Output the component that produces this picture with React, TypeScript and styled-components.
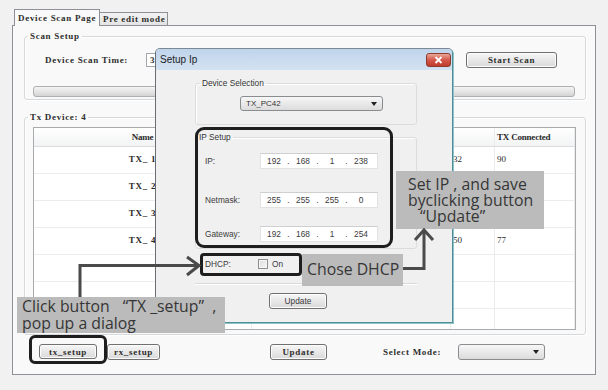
import React from "react";
import styled, { createGlobalStyle } from "styled-components";

const legacy = `"Liberation Serif", "Times New Roman", serif`;
const sans = `"Liberation Sans", Arial, sans-serif`;
const serif = `"Liberation Serif", "Times New Roman", serif`;
const anno = `"Open Sans", "Noto Sans", sans-serif`;

const Global = createGlobalStyle`
  html, body { margin: 0; padding: 0; background: #f1f1f1; }
  #root { width: 608px; height: 390px; }
  *, *::before, *::after { box-sizing: border-box; }
`;

const Screen = styled.div`
  position: relative;
  width: 608px;
  height: 390px;
  padding: 9px 12px 15px 12px;
  display: flex;
  flex-direction: column;
  background: #f1f1f1;
  overflow: hidden;
  font-family: ${legacy};
  font-size: 9px;
  font-weight: bold;
  letter-spacing: 0.7px;
  color: #2e2e2e;
`;

const TabStrip = styled.div`
  display: flex;
  align-items: flex-end;
  height: 16px;
  padding-left: 2px;
  position: relative;
  z-index: 1;
`;

const Tab = styled.div<{ $active?: boolean; $w: number }>`
  width: ${(p) => p.$w}px;
  height: ${(p) => (p.$active ? 17 : 13)}px;
  margin-bottom: ${(p) => (p.$active ? -1 : 0)}px;
  padding-left: 3px;
  display: flex;
  align-items: center;
  border: 1px solid #8d9094;
  border-bottom: none;
  border-left-width: ${(p) => (p.$active ? 1 : 0)}px;
  background: ${(p) => (p.$active ? "#f9f9f9" : "linear-gradient(#f2f2f2, #e3e3e3)")};
  white-space: nowrap;
`;

const Panel = styled.div`
  flex: 1;
  border: 1px solid #8d9094;
  background: #f9f9f9;
  padding: 5px 9px 0 11px;
  display: flex;
  flex-direction: column;
`;

const Group = styled.fieldset<{ $pad: string; $mt?: number }>`
  margin: ${(p) => p.$mt ?? 0}px 0 0 0;
  min-width: 0;
  border: 1px solid #d6d9dc;
  border-radius: 3px;
  box-shadow: inset 1px 1px 0 #ffffff, 1px 1px 0 #ffffff;
  padding: ${(p) => p.$pad};
  display: flex;
  flex-direction: column;
`;

const GroupTitle = styled.legend<{ $ml: number }>`
  margin-left: ${(p) => p.$ml}px;
  padding: 0 2px;
  height: 10px;
  line-height: 10px;
  white-space: nowrap;
`;

const ScanRow = styled.div`
  display: flex;
  align-items: center;
  height: 16px;
`;

const Label = styled.span<{ $ml?: number; $w?: number }>`
  margin-left: ${(p) => p.$ml ?? 0}px;
  width: ${(p) => (p.$w ? `${p.$w}px` : "auto")};
  flex: none;
  white-space: nowrap;
`;

const TextBox = styled.div<{ $w: number; $ml?: number }>`
  width: ${(p) => p.$w}px;
  height: 14px;
  margin-left: ${(p) => p.$ml ?? 0}px;
  border: 1px solid #a3a6aa;
  background: #ffffff;
  padding-left: 3px;
  display: flex;
  align-items: center;
`;

const Button = styled.div<{ $w: number; $h?: number; $ml?: number; $mr?: number; $mt?: number; $auto?: boolean }>`
  width: ${(p) => p.$w}px;
  height: ${(p) => p.$h ?? 15}px;
  margin-left: ${(p) => (p.$auto ? "auto" : `${p.$ml ?? 0}px`)};
  margin-right: ${(p) => p.$mr ?? 0}px;
  margin-top: ${(p) => p.$mt ?? 0}px;
  align-self: ${(p) => (p.$mt ? "flex-start" : "auto")};
  flex: none;
  border: 1px solid #707070;
  border-radius: 3px;
  background: linear-gradient(#f6f6f6, #e8e8e8 50%, #d9d9d9);
  box-shadow: inset 0 0 0 1px #fcfcfc;
  display: flex;
  align-items: center;
  justify-content: center;
  white-space: nowrap;
`;

const Progress = styled.div`
  margin-top: 18px;
  height: 11px;
  border: 1px solid #adb0b3;
  border-radius: 3px;
  background: linear-gradient(#f4f4f4, #e2e2e2 60%, #d3d3d3);
`;

const TableBox = styled.div`
  height: 203px;
  border: 1px solid #a8abae;
  background: #ffffff;
  overflow: hidden;
`;

const TRow = styled.div<{ $head?: boolean }>`
  display: grid;
  grid-template-columns: 218px 199px 44px 1fr;
  height: ${(p) => (p.$head ? 19 : 27)}px;
  border-bottom: 1px solid ${(p) => (p.$head ? "#dcdcdc" : "#ececec")};
  background: ${(p) => (p.$head ? "linear-gradient(#ffffff, #f2f3f4)" : "#ffffff")};
`;

const Cell = styled.div<{ $kind: "name" | "num" | "blank" }>`
  display: flex;
  align-items: center;
  justify-content: ${(p) => (p.$kind === "name" ? "center" : "flex-start")};
  padding-left: ${(p) => (p.$kind === "num" ? 2 : 0)}px;
  padding-bottom: 2px;
  border-right: 1px solid #ececec;
  font-family: ${serif};
  font-weight: ${(p) => (p.$kind === "name" ? "bold" : "normal")};
  letter-spacing: ${(p) => (p.$kind === "name" ? 0.7 : 0)}px;
  font-size: 9px;
  white-space: nowrap;
  color: #2a2a2a;
`;

const HeadCell = styled(Cell)`
  font-weight: bold;
  letter-spacing: -0.2px;
  padding-bottom: 0;
`;

const BottomRow = styled.div`
  display: flex;
  align-items: center;
  height: 17px;
  margin-top: 8px;
`;

const Combo = styled.div<{ $w: number; $h: number; $ml?: number }>`
  width: ${(p) => p.$w}px;
  height: ${(p) => p.$h}px;
  margin-left: ${(p) => p.$ml ?? 0}px;
  flex: none;
  border: 1px solid #8a8d90;
  border-radius: 3px;
  background: linear-gradient(#f7f7f7, #e9e9e9 50%, #dcdcdc);
  display: flex;
  align-items: center;
  padding: 0 5px;
  font-family: ${sans};
  font-weight: normal;
  letter-spacing: 0;
  font-size: 8px;
  color: #333;
`;

const DropArrow = styled.span`
  margin-left: auto;
  width: 0;
  height: 0;
  border-left: 3px solid transparent;
  border-right: 3px solid transparent;
  border-top: 4px solid #222;
`;

/* ---------- Dialog ---------- */

const Dialog = styled.div`
  position: absolute;
  left: 155px;
  top: 48px;
  width: 298px;
  height: 275px;
  border: 1px solid #4e8e97;
  border-left-color: #6a6e72;
  border-top-color: #7b8996;
  border-radius: 5px 5px 0 0;
  background: #f0f0f0;
  box-shadow: 1px 1px 0 #8fc3c9;
  display: flex;
  flex-direction: column;
  z-index: 5;
  font-family: ${sans};
  font-weight: normal;
  letter-spacing: 0;
  font-size: 8.3px;
  color: #3c3c3c;
`;

const TitleBar = styled.div`
  height: 21px;
  flex: none;
  display: flex;
  align-items: center;
  padding: 0 1px 0 4px;
  background: linear-gradient(#bfd4eb, #d3e2f2);
  border-radius: 4px 4px 0 0;
  font-size: 10px;
  color: #1d1d1d;
`;

const CloseBtn = styled.div`
  margin-left: auto;
  width: 25px;
  height: 14px;
  border: 1px solid #8c3b31;
  border-radius: 3px;
  background: linear-gradient(#eaa797, #d4584a 50%, #c03c2c);
  display: flex;
  align-items: center;
  justify-content: center;
`;

const DialogBody = styled.div`
  flex: 1;
  display: flex;
  flex-direction: column;
  padding: 0 35px 0 39px;
`;

const DlgGroup = styled.fieldset<{ $pad: string; $mt: number }>`
  margin: ${(p) => p.$mt}px 0 0 0;
  min-width: 0;
  border: 1px solid #dcdcdc;
  border-radius: 3px;
  box-shadow: inset 1px 1px 0 #ffffff;
  padding: ${(p) => p.$pad};
  display: flex;
  flex-direction: column;
`;

const DlgTitle = styled.legend<{ $ml: number }>`
  margin-left: ${(p) => p.$ml}px;
  padding: 0 2px;
  height: 10px;
  line-height: 10px;
  white-space: nowrap;
  color: #333;
`;

const IpRow = styled.div<{ $mt?: number }>`
  display: flex;
  align-items: center;
  height: 16px;
  margin-top: ${(p) => p.$mt ?? 0}px;
`;

const IpBox = styled.div`
  width: 118px;
  height: 16px;
  border: 1px solid #e2e2e2;
  border-top-color: #cfcfcf;
  background: #ffffff;
  display: flex;
  align-items: center;
  padding-left: 2px;
  color: #3a3a3a;
`;

const IpPart = styled.span`
  width: 22px;
  text-align: center;
`;

const IpDot = styled.span`
  width: 7px;
  text-align: center;
`;

const DhcpRow = styled.div`
  display: flex;
  align-items: center;
  height: 12px;
  margin-top: 9px;
  padding-left: 10px;
`;

const CheckBox = styled.span`
  width: 10px;
  height: 10px;
  flex: none;
  border: 1px solid #8f8f8f;
  background: linear-gradient(135deg, #dcdcdc, #f6f6f6);
  box-shadow: inset 0 0 0 1px #f4f4f4;
`;

const Separator = styled.div`
  margin-top: 13px;
  height: 2px;
  border-top: 1px solid #dadada;
  border-bottom: 1px solid #ffffff;
`;

/* ---------- Annotations ---------- */

const Frame = styled.div<{ $x: number; $y: number; $w: number; $h: number; $r: number }>`
  position: absolute;
  left: ${(p) => p.$x}px;
  top: ${(p) => p.$y}px;
  width: ${(p) => p.$w}px;
  height: ${(p) => p.$h}px;
  border: 3px solid #1e1e1e;
  border-radius: ${(p) => p.$r}px;
  z-index: 9;
`;

const Callout = styled.div<{ $x: number; $y: number; $w: number; $h: number; $pad: string; $lh: number }>`
  position: absolute;
  left: ${(p) => p.$x}px;
  top: ${(p) => p.$y}px;
  width: ${(p) => p.$w}px;
  height: ${(p) => p.$h}px;
  padding: ${(p) => p.$pad};
  background: #bbbbbb;
  color: #363636;
  font-family: ${anno};
  font-weight: normal;
  letter-spacing: 0;
  font-size: 15.8px;
  line-height: ${(p) => p.$lh}px;
  white-space: pre;
  z-index: 10;
`;

const Indent = styled.span<{ $w: number }>`
  padding-left: ${(p) => p.$w}px;
`;

const Connectors = styled.svg`
  position: absolute;
  left: 0;
  top: 0;
  z-index: 11;
  pointer-events: none;
`;

const rows = [
  { name: "TX_ 1", c: "32", d: "90" },
  { name: "TX_ 2", c: "", d: "" },
  { name: "TX_ 3", c: "", d: "" },
  { name: "TX_ 4", c: "50", d: "77" },
  { name: "", c: "", d: "" },
  { name: "", c: "", d: "" },
  { name: "", c: "", d: "" },
  { name: "", c: "", d: "" },
];

const IpField = ({ parts }: { parts: string[] }) => (
  <IpBox>
    {parts.map((p, i) => (
      <React.Fragment key={i}>
        <IpPart>{p}</IpPart>
        {i < parts.length - 1 && <IpDot>.</IpDot>}
      </React.Fragment>
    ))}
  </IpBox>
);

export default function App() {
  return (
    <>
      <Global />
      <Screen>
        <TabStrip>
          <Tab $active $w={86}>Device Scan Page</Tab>
          <Tab $w={68}>Pre edit mode</Tab>
        </TabStrip>
        <Panel>
          <Group $pad="11px 10px 2px 8px">
            <GroupTitle $ml={-5}>Scan Setup</GroupTitle>
            <ScanRow>
              <Label $ml={12} $w={101}>Device Scan Time:</Label>
              <TextBox $w={150}>3</TextBox>
              <Button $w={91} $h={16} $auto $mr={18}>Start Scan</Button>
            </ScanRow>
            <Progress />
          </Group>

          <Group $pad="5px 9px 4px 8px" $mt={12}>
            <GroupTitle $ml={-5}>Tx Device: 4</GroupTitle>
            <TableBox>
              <TRow $head>
                <HeadCell $kind="name">Name</HeadCell>
                <HeadCell $kind="blank" />
                <HeadCell $kind="blank" />
                <HeadCell $kind="num">TX Connected</HeadCell>
              </TRow>
              {rows.map((r, i) => (
                <TRow key={i}>
                  <Cell $kind="name">{r.name}</Cell>
                  <Cell $kind="blank" />
                  <Cell $kind="num">{r.c}</Cell>
                  <Cell $kind="num">{r.d}</Cell>
                </TRow>
              ))}
            </TableBox>
          </Group>

          <BottomRow>
            <Button $w={58} $ml={15}>tx_setup</Button>
            <Button $w={53} $h={16} $ml={10}>rx_setup</Button>
            <Button $w={57} $h={16} $ml={110}>Update</Button>
            <Label $ml={56} $w={58}>Select Mode:</Label>
            <Combo $w={87} $h={16} $ml={17}>
              <DropArrow />
            </Combo>
          </BottomRow>
        </Panel>

        <Dialog>
          <TitleBar>
            Setup Ip
            <CloseBtn>
              <svg width="9" height="8" viewBox="0 0 9 8">
                <path d="M1.5 1 L7.5 7 M7.5 1 L1.5 7" stroke="#ffffff" strokeWidth="1.8" />
              </svg>
            </CloseBtn>
          </TitleBar>
          <DialogBody>
            <DlgGroup $mt={8} $pad="8px 0 13px 44px">
              <DlgTitle $ml={-40}>Device Selection</DlgTitle>
              <Combo $w={143} $h={15}>
                TX_PC42
                <DropArrow />
              </Combo>
            </DlgGroup>
            <DlgGroup $mt={7} $pad="11px 0 6px 9px">
              <DlgTitle $ml={-8}>IP Setup</DlgTitle>
              <IpRow>
                <Label $w={55}>IP:</Label>
                <IpField parts={["192", "168", "1", "238"]} />
              </IpRow>
              <IpRow $mt={23}>
                <Label $w={55}>Netmask:</Label>
                <IpField parts={["255", "255", "255", "0"]} />
              </IpRow>
              <IpRow $mt={18}>
                <Label $w={55}>Gateway:</Label>
                <IpField parts={["192", "168", "1", "254"]} />
              </IpRow>
            </DlgGroup>
            <DhcpRow>
              <Label $w={53}>DHCP:</Label>
              <CheckBox />
              <Label $ml={4}>On</Label>
            </DhcpRow>
            <Separator />
            <Button $w={58} $h={16} $ml={74} $mt={8}>
              Update
            </Button>
          </DialogBody>
        </Dialog>

        <Frame $x={195} $y={127} $w={198} $h={121} $r={9} />
        <Frame $x={200} $y={253} $w={102} $h={23} $r={4} />
        <Frame $x={29} $y={335} $w={78} $h={29} $r={6} />

        <Callout $x={302} $y={254} $w={101} $h={32} $pad="0 0 0 5px" $lh={31}>
          Chose DHCP
        </Callout>
        <Callout $x={396} $y={171} $w={148} $h={58} $pad="5px 0 0 12px" $lh={16}>
          {"Set IP , and save\nbyclicking button\n"}
          <Indent $w={12}>“Update”</Indent>
        </Callout>
        <Callout $x={17} $y={297} $w={208} $h={36} $pad="1px 0 0 5px" $lh={17}>
          {"Click button"}
          <Indent $w={13}>{"“TX _setup”  ,"}</Indent>
          {"\npop up a dialog"}
        </Callout>

        <Connectors width="608" height="390" viewBox="0 0 608 390">
          <g stroke="#4a4a4a" strokeWidth="3" fill="none">
            <path d="M80 297 V265.5 H198" />
            <path d="M187 257 L199 265.5 L187 275" />
            <path d="M403 268.5 H424 V231" />
            <path d="M415 240 L424 230 L433 240" />
          </g>
        </Connectors>
      </Screen>
    </>
  );
}
